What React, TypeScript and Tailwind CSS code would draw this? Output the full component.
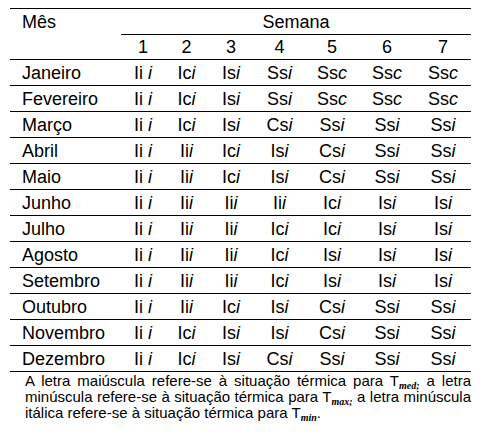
const weeks = ['1', '2', '3', '4', '5', '6', '7'];

const rows: [string, string[]][] = [
  ['Janeiro', ['Ii i', 'Ici', 'Isi', 'Ssi', 'Ssc', 'Ssc', 'Ssc']],
  ['Fevereiro', ['Ii i', 'Ici', 'Isi', 'Ssi', 'Ssc', 'Ssc', 'Ssc']],
  ['Março', ['Ii i', 'Ici', 'Isi', 'Csi', 'Ssi', 'Ssi', 'Ssi']],
  ['Abril', ['Ii i', 'Iii', 'Ici', 'Isi', 'Csi', 'Ssi', 'Ssi']],
  ['Maio', ['Ii i', 'Iii', 'Ici', 'Isi', 'Csi', 'Ssi', 'Ssi']],
  ['Junho', ['Ii i', 'Iii', 'Iii', 'Iii', 'Ici', 'Isi', 'Isi']],
  ['Julho', ['Ii i', 'Iii', 'Iii', 'Ici', 'Ici', 'Isi', 'Isi']],
  ['Agosto', ['Ii i', 'Iii', 'Iii', 'Ici', 'Isi', 'Isi', 'Isi']],
  ['Setembro', ['Ii i', 'Iii', 'Iii', 'Ici', 'Isi', 'Isi', 'Isi']],
  ['Outubro', ['Ii i', 'Iii', 'Ici', 'Isi', 'Csi', 'Ssi', 'Ssi']],
  ['Novembro', ['Ii i', 'Ici', 'Isi', 'Isi', 'Csi', 'Ssi', 'Ssi']],
  ['Dezembro', ['Ii i', 'Ici', 'Isi', 'Csi', 'Ssi', 'Ssi', 'Ssi']],
];

const cols = 'grid grid-cols-[111px_44px_43px_46px_51px_54px_56px_56px]';

// last letter of each code is the italic one (T min)
const Code = ({ value }: { value: string }) => (
  <span className="whitespace-pre">
    {value.slice(0, -1)}
    <i>{value.slice(-1)}</i>
  </span>
);

const Sub = ({ children }: { children: string }) => (
  <sub className="font-['Liberation_Serif',serif] text-[10px] leading-none font-bold italic">
    {children}
  </sub>
);

export default function App() {
  return (
    <div className="min-h-screen bg-white pl-[10px] pt-[8px] font-['Liberation_Sans',Arial,sans-serif] text-black">
      <div className="w-[461px] text-[18px] leading-none">
        <div className={`${cols} grid-rows-[26px_24px] border-t border-black`}>
          <div className="flex items-center pl-[12px]">Mês</div>
          <div className="col-span-7 flex items-center justify-center border-b border-black">Semana</div>
          <div />
          {weeks.map((w) => (
            <div key={w} className="flex items-center justify-center">
              {w}
            </div>
          ))}
        </div>

        {rows.map(([month, codes]) => (
          <div key={month} className={`${cols} h-[26px] border-t border-black`}>
            <div className="flex items-center pl-[12px]">{month}</div>
            {codes.map((c, i) => (
              <div key={i} className="flex items-center justify-center">
                <Code value={c} />
              </div>
            ))}
          </div>
        ))}
        <div className="border-t border-black" />
      </div>

      <div className="ml-[15px] mt-[1px] w-[446px] text-[15px] leading-[16px]">
        <div className="text-justify [text-align-last:justify]">
          A letra maiúscula refere-se à situação térmica para T<Sub>med;</Sub> a letra
        </div>
        <div className="text-justify [text-align-last:justify]">
          minúscula refere-se à situação térmica para T<Sub>max;</Sub> a letra minúscula
        </div>
        <div>
          itálica refere-se à situação térmica para T<Sub>min</Sub>.
        </div>
      </div>
    </div>
  );
}
